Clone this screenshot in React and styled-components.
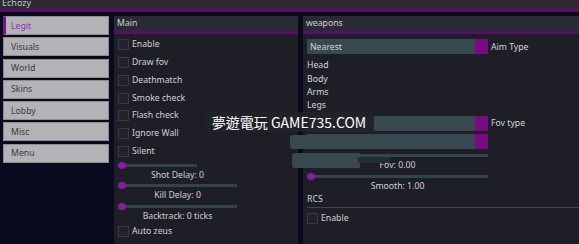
import React from "react";
import styled, { createGlobalStyle } from "styled-components";

const Global = createGlobalStyle`
  html, body { margin: 0; padding: 0; background: #0a0a1e; }
  #root { width: 579px; height: 244px; overflow: hidden; }
`;

const Root = styled.div`
  position: relative;
  width: 579px;
  height: 244px;
  overflow: hidden;
  background: #0a0a1e;
  display: flex;
  flex-direction: column;
  font-family: "Noto Sans", "Open Sans", sans-serif;
  font-size: 8.7px;
  color: #d2d2d6;
`;

const TitleBar = styled.div`
  height: 9px;
  flex-shrink: 0;
  background: #2b2a33;
  border-bottom: 3px solid #5a0d6b;
  overflow: hidden;
  padding-left: 2px;
  color: #c4c4c8;
  font-size: 9px;
  line-height: 9px;
  span { display: block; margin-top: -2px; }
`;

const Content = styled.div`
  flex: 1;
  display: flex;
  align-items: stretch;
  padding-top: 4px;
  min-height: 0;
`;

const Sidebar = styled.div`
  width: 106px;
  margin-left: 3px;
  flex-shrink: 0;
  display: flex;
  flex-direction: column;
  gap: 2.3px;
`;

const TabButton = styled.div`
  height: 19px;
  box-sizing: border-box;
  background: #b3b3b5;
  border: 1px solid #8c8c91;
  border-left: ${(p) => (p.$active ? "3px solid #7b0f93" : "1px solid #8c8c91")};
  padding-left: ${(p) => (p.$active ? "5px" : "7px")};
  display: flex;
  align-items: center;
  color: ${(p) => (p.$active ? "#9a2db5" : "#3a3a40")};
  font-size: 8.7px;
`;

const Panel = styled.div`
  display: flex;
  flex-direction: column;
  background: #1e1e27;
  margin-left: 5px;
  flex-shrink: 0;
  ${(p) => (p.$grow ? "flex: 1;" : `width: ${p.$w}px;`)}
`;

const PanelHeader = styled.div`
  height: 15px;
  flex-shrink: 0;
  background: #2a2a33;
  border-bottom: 3px solid #5a0d6b;
  padding-left: 3px;
  line-height: 15px;
  color: #d0d0d4;
`;

const PanelBody = styled.div`
  display: flex;
  flex-direction: column;
  padding: 5.3px 0 0 4px;
`;

const CheckRow = styled.div`
  height: 17.8px;
  flex-shrink: 0;
  display: flex;
  align-items: flex-start;
  gap: 3px;
  margin-top: ${(p) => p.$mt || 0}px;
  line-height: 11px;
`;

const Box = styled.div`
  width: 11px;
  height: 11px;
  box-sizing: border-box;
  border: 1px solid #3a3a45;
  background: #22222b;
  flex-shrink: 0;
`;

const SliderGroup = styled.div`
  width: ${(p) => p.$w}px;
  height: ${(p) => p.$h}px;
  flex-shrink: 0;
  display: flex;
  flex-direction: column;
  align-items: center;
  margin-top: ${(p) => p.$mt || 0}px;
`;

const Track = styled.div`
  position: relative;
  align-self: flex-start;
  width: ${(p) => p.$w}px;
  height: 6px;
  &::before {
    content: "";
    position: absolute;
    left: 0;
    right: 0;
    top: 1.5px;
    height: 3px;
    background: #34444e;
  }
`;

const Knob = styled.div`
  position: absolute;
  left: 0;
  top: -0.5px;
  width: 8px;
  height: 7px;
  border-radius: 50%;
  background: #8a1ba6;
`;

const SliderLabel = styled.div`
  line-height: 10px;
  margin-top: ${(p) => p.$mt}px;
  color: #d0d0d4;
  white-space: nowrap;
`;

const ComboRow = styled.div`
  height: 14.7px;
  flex-shrink: 0;
  display: flex;
  align-items: stretch;
  margin-top: ${(p) => p.$mt || 0}px;
`;

const ComboField = styled.div`
  width: 168px;
  background: #374850;
  padding-left: 3px;
  box-sizing: border-box;
  display: flex;
  align-items: center;
  color: #d4d4d8;
`;

const ComboArrow = styled.div`
  width: 13px;
  background: #7a0a82;
`;

const ComboLabel = styled.div`
  margin-left: 3px;
  display: flex;
  align-items: center;
  color: #d4d4d8;
`;

const List = styled.div`
  margin-top: 5.3px;
  display: flex;
  flex-direction: column;
`;

const ListItem = styled.div`
  line-height: 13.3px;
  height: 13.3px;
  color: #d6d6da;
`;

const SectionTitle = styled.div`
  line-height: 10px;
  margin-top: ${(p) => p.$mt}px;
  color: #d4d4d8;
`;

const Separator = styled.div`
  height: 1px;
  background: #43434e;
  margin-top: 3px;
  margin-bottom: 5px;
`;

const Watermark = styled.div`
  position: absolute;
  left: 204px;
  top: 112px;
  width: 170px;
  height: 20px;
  background: rgba(34, 34, 40, 0.92);
  color: #ffffff;
  font-family: "Noto Sans CJK TC", "Noto Sans", sans-serif;
  font-size: 14px;
  line-height: 20px;
  text-align: center;
  white-space: nowrap;
`;

const Smudge = styled.div`
  position: absolute;
  left: ${(p) => p.$x}px;
  top: ${(p) => p.$y}px;
  width: ${(p) => p.$w}px;
  height: ${(p) => p.$h}px;
  background: ${(p) => p.$c};
  border-radius: ${(p) => p.$r || "0"};
  filter: blur(0.6px);
`;

const tabs = ["Legit", "Visuals", "World", "Skins", "Lobby", "Misc", "Menu"];
const checks = ["Enable", "Draw fov", "Deathmatch", "Smoke check", "Flash check", "Ignore Wall", "Silent"];

function Check({ label, ...rest }) {
  return (
    <CheckRow {...rest}>
      <Box />
      {label && <span>{label}</span>}
    </CheckRow>
  );
}

function Slider({ label, width, trackWidth, height, labelMt, mt, knob = true }) {
  return (
    <SliderGroup $w={width} $h={height} $mt={mt}>
      <Track $w={trackWidth}>{knob && <Knob />}</Track>
      <SliderLabel $mt={labelMt}>{label}</SliderLabel>
    </SliderGroup>
  );
}

export default function App() {
  return (
    <Root>
      <Global />
      <TitleBar>
        <span>Echozy</span>
      </TitleBar>
      <Content>
        <Sidebar>
          {tabs.map((t, i) => (
            <TabButton key={t} $active={i === 0}>
              {t}
            </TabButton>
          ))}
        </Sidebar>
        <Panel $w={184}>
          <PanelHeader>Main</PanelHeader>
          <PanelBody>
            {checks.map((c) => (
              <Check key={c} label={c} />
            ))}
            <SliderGroup $w={119} $h={0} $mt={-1.5} />
            <Slider label="Shot Delay: 0" width={119} trackWidth={79} height={20.5} labelMt={1.5} />
            <Slider label="Kill Delay: 0" width={119} trackWidth={119} height={20.5} labelMt={1.5} />
            <Slider label="Backtrack: 0 ticks" width={119} trackWidth={119} height={20.5} labelMt={1.5} />
            <Check label="Auto zeus" $mt={2} />
            <Check />
          </PanelBody>
        </Panel>
        <Panel $grow>
          <PanelHeader>weapons</PanelHeader>
          <PanelBody>
            <ComboRow>
              <ComboField>Nearest</ComboField>
              <ComboArrow />
              <ComboLabel>Aim Type</ComboLabel>
            </ComboRow>
            <List>
              <ListItem>Head</ListItem>
              <ListItem>Body</ListItem>
              <ListItem>Arms</ListItem>
              <ListItem>Legs</ListItem>
            </List>
            <ComboRow $mt={3.4}>
              <ComboField />
              <ComboArrow />
              <ComboLabel>Fov type</ComboLabel>
            </ComboRow>
            <ComboRow $mt={3.3}>
              <ComboField />
              <ComboArrow />
            </ComboRow>
            <Slider label="Fov: 0.00" width={181} trackWidth={181} height={21} labelMt={1.3} mt={4} knob={false} />
            <Slider label="Smooth: 1.00" width={181} trackWidth={181} height={21} labelMt={1.3} />
            <SectionTitle $mt={-1}>RCS</SectionTitle>
            <Separator />
            <Check label="Enable" />
          </PanelBody>
        </Panel>
      </Content>
      <Smudge $x={290} $y={134.5} $w={20} $h={14.5} $c="#374850" $r="3px 0 0 3px" />
      <Smudge $x={292} $y={153} $w={68} $h={15} $c="#374850" $r="3px 0 0 3px" />
      <Smudge $x={358} $y={156.5} $w={32} $h={6} $c="#222c34" />
      <Watermark>夢遊電玩 GAME735.COM</Watermark>
    </Root>
  );
}
